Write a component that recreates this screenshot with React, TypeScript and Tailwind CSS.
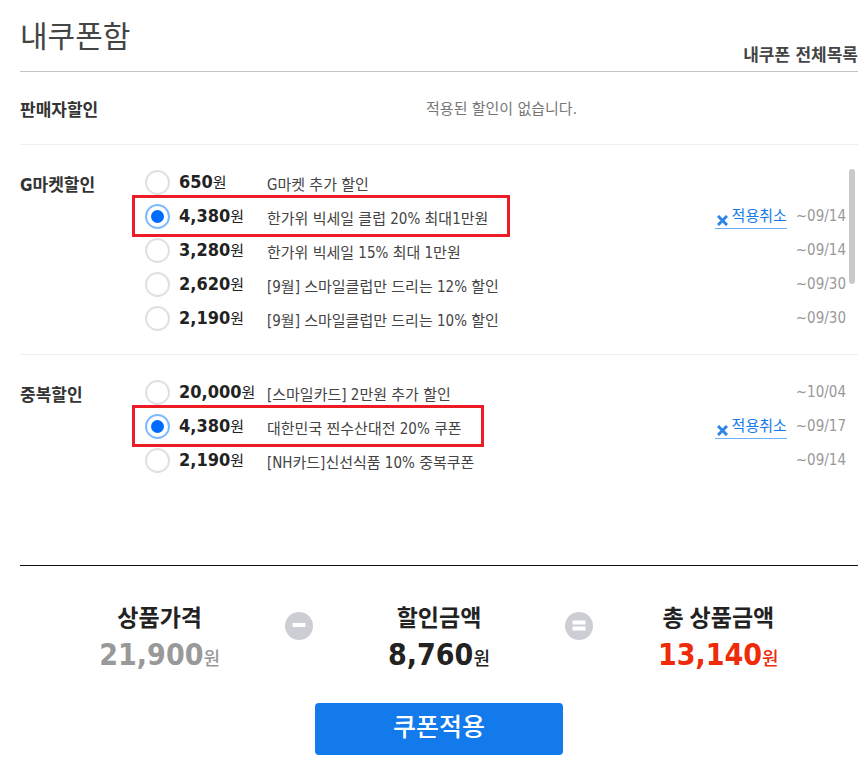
import { useState } from "react";

interface Coupon {
  id: string;
  amount: number;
  name: string;
  until: string;
}

const PRICE = 21900;

const marketCoupons: Coupon[] = [
  { id: "g1", amount: 650, name: "G마켓 추가 할인", until: "" },
  { id: "g2", amount: 4380, name: "한가위 빅세일 클럽 20% 최대1만원", until: "~09/14" },
  { id: "g3", amount: 3280, name: "한가위 빅세일 15% 최대 1만원", until: "~09/14" },
  { id: "g4", amount: 2620, name: "[9월] 스마일클럽만 드리는 12% 할인", until: "~09/30" },
  { id: "g5", amount: 2190, name: "[9월] 스마일클럽만 드리는 10% 할인", until: "~09/30" },
];

const extraCoupons: Coupon[] = [
  { id: "e1", amount: 20000, name: "[스마일카드] 2만원 추가 할인", until: "~10/04" },
  { id: "e2", amount: 4380, name: "대한민국 찐수산대전 20% 쿠폰", until: "~09/17" },
  { id: "e3", amount: 2190, name: "[NH카드]신선식품 10% 중복쿠폰", until: "~09/14" },
];

function amountOf(list: Coupon[], id: string) {
  return list.find((c) => c.id === id)?.amount ?? 0;
}

interface CouponListProps {
  group: string;
  coupons: Coupon[];
  selected: string;
  onSelect: (id: string) => void;
}

function CouponList({ group, coupons, selected, onSelect }: CouponListProps) {
  return (
    <ul className="flex-1">
      {coupons.map((coupon) => {
        const checked = coupon.id === selected;
        return (
          <li key={coupon.id} className="flex h-[34px] items-center justify-between pr-3">
            <label className="relative flex items-center">
              {checked && (
                <span className="pointer-events-none absolute -top-2 -right-[22px] -bottom-2 -left-[13px] border-3 border-[#ed1c24]" />
              )}
              <input
                type="radio"
                name={group}
                checked={checked}
                onChange={() => onSelect(coupon.id)}
                className="flex size-[25px] shrink-0 appearance-none items-center justify-center rounded-full border-2 border-[#e0e0e0] bg-white before:size-[13px] before:rounded-full checked:border-[#7db9ff] checked:before:bg-[#006cff]"
              />
              <span className="ml-[9px] w-[88px] text-[15px] whitespace-nowrap text-[#222]">
                <strong className="text-lg leading-6 font-bold">{coupon.amount.toLocaleString("en-US")}</strong>
                원
              </span>
              <span className="pt-[6px] text-[15px] leading-5 whitespace-nowrap text-[#444]">{coupon.name}</span>
            </label>

            <div className="flex items-center gap-[9px] text-[15px] leading-5">
              {checked && (
                <button
                  type="button"
                  onClick={() => onSelect("")}
                  className="flex cursor-pointer items-center gap-1 border-b border-[#6fb0f7] pt-[3px] pb-[2px] pl-[2px] text-[#127aeb]"
                >
                  <svg viewBox="0 0 11 11" className="mt-2 size-[11px]" aria-hidden="true">
                    <path d="M1 1 10 10M10 1 1 10" stroke="#2d85e6" strokeWidth="3" />
                  </svg>
                  적용취소
                </button>
              )}
              <span className="text-[#999]">{coupon.until}</span>
            </div>
          </li>
        );
      })}
    </ul>
  );
}

function Operator({ equal = false }: { equal?: boolean }) {
  return (
    <svg viewBox="0 0 28 28" className="-mx-[14px] mt-[11px] size-7 shrink-0" aria-hidden="true">
      <circle cx="14" cy="14" r="14" fill="#cdced4" />
      {equal ? (
        <path d="M7.5 8.5h13v4h-13zM7.5 14.5h13v4h-13z" fill="#fff" />
      ) : (
        <path d="M7.5 11h13v4h-13z" fill="#fff" />
      )}
    </svg>
  );
}

function Total({ label, value, color }: { label: string; value: number; color: string }) {
  return (
    <div className="flex-1 text-center">
      <dt className="font-['Noto_Sans','Noto_Sans_CJK_KR',sans-serif] text-[23px] leading-8 font-bold text-[#222]">
        {label}
      </dt>
      <dd className={`pt-[2px] text-lg leading-10 font-medium ${color}`}>
        <strong className="text-3xl leading-10 font-bold">{value.toLocaleString("en-US")}</strong>
        원
      </dd>
    </div>
  );
}

export default function App() {
  const [market, setMarket] = useState("g2");
  const [extra, setExtra] = useState("e2");

  const discount = amountOf(marketCoupons, market) + amountOf(extraCoupons, extra);

  return (
    <main className="bg-white pr-[6px] pl-5 font-['DejaVu_Sans_Condensed','Noto_Sans_CJK_KR',sans-serif] text-[#333]">
      <header className="flex items-end justify-between border-b border-[#c4c4c4] pt-4">
        <h1 className="pb-[14px] text-[30px] leading-[41px] font-normal text-[#444]">내쿠폰함</h1>
        <a href="#coupons" className="pb-1 text-[17px] leading-6 font-bold text-[#444]">
          내쿠폰 전체목록
        </a>
      </header>

      <section className="flex items-center border-b border-[#ededf2] py-[22px]">
        <h2 className="w-[125px] pt-1 text-[17px] leading-6 font-bold">판매자할인</h2>
        <p className="flex-1 pt-[2px] text-center text-[15px] leading-6 text-[#777]">적용된 할인이 없습니다.</p>
      </section>

      <section id="coupons" className="relative flex border-b border-[#ededf2] pt-5 pb-[19px]">
        <h2 className="w-[125px] pt-1 text-[17px] leading-8 font-bold">G마켓할인</h2>
        <CouponList group="market" coupons={marketCoupons} selected={market} onSelect={setMarket} />
        {/* scroll thumb */}
        <div className="absolute top-6 right-[3px] h-[115px] w-[6px] rounded-full bg-[#c9c9c9]" />
      </section>

      <section className="flex border-b border-[#111] pt-5 pb-[88px]">
        <h2 className="w-[125px] pt-1 text-[17px] leading-8 font-bold">중복할인</h2>
        <CouponList group="extra" coupons={extraCoupons} selected={extra} onSelect={setExtra} />
      </section>

      <dl className="flex items-start pt-[35px]">
        <Total label="상품가격" value={PRICE} color="text-[#999]" />
        <Operator />
        <Total label="할인금액" value={discount} color="text-[#222]" />
        <Operator equal />
        <Total label="총 상품금액" value={PRICE - discount} color="text-[#ef2b0a]" />
      </dl>

      <div className="flex justify-center pt-6 pb-[7px]">
        <button
          type="button"
          className="h-[52px] w-[248px] cursor-pointer rounded bg-[#127aeb] pb-1 text-[25px] leading-none font-medium text-white"
        >
          쿠폰적용
        </button>
      </div>
    </main>
  );
}
